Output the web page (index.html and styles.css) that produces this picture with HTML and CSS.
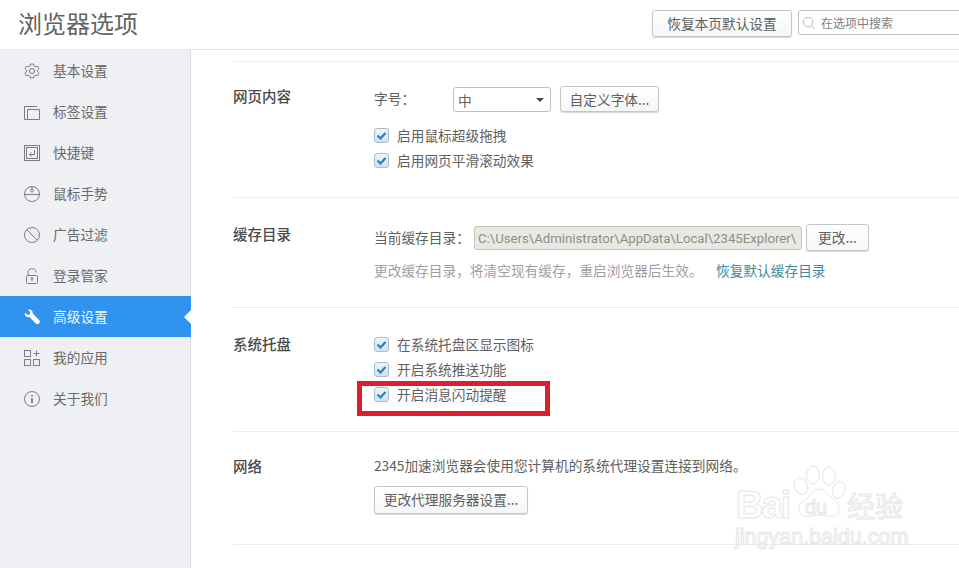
FILE: index.html
```html
<!DOCTYPE html>
<html lang="zh-CN">
<head>
<meta charset="utf-8">
<title>浏览器选项</title>
<link rel="stylesheet" href="styles.css">
</head>
<body>
<div class="page">
  <header class="top">
    <h1 class="title">浏览器选项</h1>
    <div class="top-actions">
      <button class="btn btn-reset">恢复本页默认设置</button>
      <div class="search">
        <svg class="search-icon" viewBox="0 0 16 16"><circle cx="7" cy="7" r="5.5"/><path d="M11 11l4 4"/></svg>
        <span>在选项中搜索</span>
      </div>
    </div>
  </header>
  <div class="body">
    <nav class="side">
      <a class="item"><svg class="ico" viewBox="0 0 16 16"><path d="M6.5 1h3l.5 2 1.6.8 2-.6 1.4 2.6-1.4 1.4v1.6l1.4 1.4-1.4 2.6-2-.6-1.600.8-.5 2h-3l-.5-2-1.600-.8-2 .6L1 10.200l1.400-1.400V7.200L1 5.800l1.400-2.600 2 .6L6 3z"/><circle cx="8" cy="8" r="2.600"/></svg><span class="t">基本设置</span></a>
      <a class="item"><svg class="ico" viewBox="0 0 16 16"><path d="M.5 15.500V2.500H13M3.500 15.500V5.500H15.500V15.500M.5 15.500H15.500"/></svg><span class="t">标签设置</span></a>
      <a class="item"><svg class="ico" viewBox="0 0 16 16"><rect x=".5" y=".5" width="15" height="15"/><rect x="2.500" y="2.500" width="11" height="11"/><path d="M10.500 5v4.500H5.500M7.500 7.500l-2 2 2 2"/></svg><span class="t">快捷键</span></a>
      <a class="item"><svg class="ico" viewBox="0 0 16 16"><rect x=".5" y=".5" width="15" height="15" rx="7.500"/><path d="M.5 8.500h15M8 .5v3"/><rect x="6.800" y="3" width="2.400" height="3" rx="1.200"/></svg><span class="t">鼠标手势</span></a>
      <a class="item"><svg class="ico" viewBox="0 0 16 16"><circle cx="8" cy="8" r="7.500"/><path d="M2.800 2.800l10.400 10.400"/></svg><span class="t">广告过滤</span></a>
      <a class="item"><svg class="ico" viewBox="0 0 16 16"><path d="M4 7V5a4 4 0 0 1 8-.5"/><rect x="2.500" y="7.500" width="11" height="8" rx="1"/><circle cx="8" cy="10.500" r="1"/><path d="M8 11.500v2"/></svg><span class="t">登录管家</span></a>
      <a class="item active"><svg class="ico" viewBox="0 0 16 16"><path class="solid" d="M1 3.500 3.500 6 5.800 5.200 6.300 3 3.800.8C6 -.3 9 1 8.800 4.500L15.500 11.500C16 12.500 15.800 13.500 15 14.500 14 15.500 12.800 15.500 12 14.800L5.500 8C2.500 8.500.2 6.500 1 3.500Z"/></svg><span class="t">高级设置</span></a>
      <a class="item"><svg class="ico" viewBox="0 0 16 16"><rect x=".5" y=".5" width="6" height="6"/><rect x=".5" y="9.500" width="6" height="6"/><rect x="9.500" y="9.500" width="6" height="6"/><path d="M12.500 .5v6M9.500 3.500h6"/></svg><span class="t">我的应用</span></a>
      <a class="item"><svg class="ico" viewBox="0 0 16 16"><circle cx="8" cy="8" r="7.500"/><path class="thick" d="M8 7v5M8 4v1.500"/></svg><span class="t">关于我们</span></a>
    </nav>
    <main class="main">
      <div class="spacer"></div>
      <section class="sec sec-font">
        <h2 class="sec-title">网页内容</h2>
        <div class="sec-body">
          <div class="row font-row">
            <span class="font-label">字号<span class="punct">：</span></span>
            <div class="select"><span>中</span><i class="caret"></i></div>
            <button class="btn btn-font">自定义字体...</button>
          </div>
          <label class="check"><i class="box"><svg viewBox="0 0 13 13"><path d="M2.500 6.500l3 3 5-5.500"/></svg></i><span class="t">启用鼠标超级拖拽</span></label>
          <label class="check"><i class="box"><svg viewBox="0 0 13 13"><path d="M2.500 6.500l3 3 5-5.500"/></svg></i><span class="t">启用网页平滑滚动效果</span></label>
        </div>
      </section>
      <section class="sec sec-cache">
        <h2 class="sec-title">缓存目录</h2>
        <div class="sec-body">
          <div class="row cache-row">
            <span class="cache-label t">当前缓存目录<span class="punct">：</span></span>
            <div class="path">C:\Users\Administrator\AppData\Local\2345Explorer\</div>
            <button class="btn btn-change">更改...</button>
          </div>
          <div class="hint-row">
            <span class="hint">更改缓存目录<span class="punct">，</span>将清空现有缓存<span class="punct">，</span>重启浏览器后生效。</span>
            <a class="link">恢复默认缓存目录</a>
          </div>
        </div>
      </section>
      <section class="sec sec-tray">
        <h2 class="sec-title">系统托盘</h2>
        <div class="sec-body">
          <label class="check"><i class="box"><svg viewBox="0 0 13 13"><path d="M2.500 6.500l3 3 5-5.500"/></svg></i><span class="t">在系统托盘区显示图标</span></label>
          <label class="check"><i class="box"><svg viewBox="0 0 13 13"><path d="M2.500 6.500l3 3 5-5.500"/></svg></i><span class="t">开启系统推送功能</span></label>
          <label class="check"><i class="box"><svg viewBox="0 0 13 13"><path d="M2.500 6.500l3 3 5-5.500"/></svg></i><span class="t">开启消息闪动提醒</span></label>
        </div>
      </section>
      <section class="sec sec-net">
        <h2 class="sec-title">网络</h2>
        <div class="sec-body">
          <p class="net-text">2345加速浏览器会使用您计算机的系统代理设置连接到网络。</p>
          <button class="btn btn-proxy">更改代理服务器设置...</button>
        </div>
      </section>
    </main>
  </div>
  <div class="redbox"></div>
  <div class="mark">
    <svg class="paw" viewBox="0 0 60 60"><ellipse cx="14" cy="23" rx="6.500" ry="8.500" transform="rotate(-20 14 23)"/><ellipse cx="26" cy="12" rx="6.500" ry="9"/><ellipse cx="42" cy="13" rx="6.500" ry="9"/><ellipse cx="52" cy="27" rx="6" ry="8.500" transform="rotate(20 52 27)"/><path d="M32 26C26 26 24 32 19 36 13 40 10 45 13 50 16 55 24 53 32 52 40 53 48 55 51 50 54 45 50 39 46 36 41 32 38 26 32 26Z"/></svg>
    <span class="mark-du">du</span>
    <span class="mark-bai">Bai</span>
    <span class="mark-jy">经验</span>
    <span class="mark-url">jingyan.baidu.com</span>
  </div>
</div>
</body>
</html>
```
FILE: styles.css
```css
* { box-sizing: border-box; }
html, body { margin: 0; padding: 0; }
body {
  width: 959px; height: 568px; overflow: hidden; background: #fff;
  font-family: "Noto Sans CJK SC", "Liberation Sans", sans-serif;
  font-size: 13.7px; color: #606060;
}
.page { position: relative; width: 959px; height: 568px; overflow: hidden; }
.t { padding-bottom: 2px; }
.punct { font-family: "Noto Sans CJK TC", sans-serif; }
.top {
  height: 50px; display: flex; align-items: flex-start; justify-content: space-between;
  border-bottom: 1px solid #e6e7e9; padding-left: 18px;
}
.title { margin: 6px 0 0; font-size: 24px; line-height: 34px; font-weight: 400; color: #626262; }
.top-actions { display: flex; gap: 6px; padding-top: 10px; width: 307px; flex: none; }
.btn {
  font: inherit; color: #606060; border: 1px solid #c4c6c9; border-radius: 3px;
  background: linear-gradient(#fff, #f5f6f8); box-shadow: 0 1px 1px #d8d8d8; padding: 0; line-height: 1;
}
.btn-reset { width: 140px; height: 27px; flex: none; }
.search {
  width: 200px; height: 25px; flex: none; display: flex; align-items: center; gap: 5px;
  border: 1px solid #bfc1c4; border-radius: 3px 0 0 3px; padding-left: 3px; font-size: 12px; color: #808080;
}
.search-icon { width: 14px; height: 14px; fill: none; stroke: #aeb2b6; stroke-width: 1; }
.body { display: flex; height: 518px; }
.side { width: 191px; flex: none; background: #eef0f4; border-right: 1px solid #dcdee2; }
.item { position: relative; display: flex; align-items: center; height: 41px; padding-left: 24px; gap: 13px; color: #6a6a6a; }
.ico { width: 16px; height: 16px; flex: none; fill: none; stroke: #7a7d85; stroke-width: 1; }
.thick { stroke-width: 1.800; }
.item.active { background: #3093ef; color: #e6fbff; margin-right: -1px; }
.item.active::after {
  content: ""; position: absolute; right: 0; top: 14px; width: 0; height: 0;
  border: 7px solid transparent; border-right-color: #fff; border-left-width: 0;
}
.solid { fill: #fff; stroke: none; }
.main { flex: 1; padding-left: 42px; min-width: 0; }
.spacer { height: 12px; border-bottom: 1px solid #ececec; }
.sec { display: flex; border-bottom: 1px solid #ececec; }
.sec-title { width: 141px; flex: none; margin: 0; font-size: 14.500px; line-height: 20px; font-weight: 500; color: #4a4a4a; }
.sec-body { flex: 1; min-width: 0; }
.sec-font { height: 136px; padding-top: 24px; }
.sec-cache { height: 110px; padding-top: 26px; }
.sec-tray { height: 124px; padding-top: 26px; }
.sec-net { height: 113px; padding-top: 24px; }
.row { display: flex; }
.font-row { align-items: flex-start; height: 37px; padding-top: 1px; }
.font-label { width: 79px; flex: none; line-height: 22px; }
.select {
  width: 98px; height: 25px; flex: none; display: flex; align-items: center; justify-content: space-between;
  border: 1px solid #bfc1c4; border-radius: 3px; padding: 0 6px 0 4px;
}
.caret { width: 0; height: 0; border: 4px solid transparent; border-top: 4px solid #444; border-bottom-width: 0; }
.btn-font { width: 99px; height: 26px; margin-left: 9px; margin-top: -1px; padding-top: 1px; flex: none; }
.check { display: flex; align-items: center; height: 25px; gap: 8px; }
.box {
  width: 15px; height: 15px; flex: none; border: 1px solid #aebcc7; border-radius: 3px;
  background: linear-gradient(#eef5fb, #cde2f3); display: block;
}
.box svg { display: block; width: 13px; height: 13px; fill: none; stroke: #2a7fb8; stroke-width: 2.200; }
.cache-row { align-items: center; height: 27px; }
.cache-label { width: 100px; flex: none; white-space: nowrap; }
.path {
  width: 328px; height: 24px; flex: none; border: 1px solid #c5c5bd; border-radius: 3px; background: #e9e9e3;
  color: #8e8e88; font-family: "Roboto", "Noto Sans CJK SC", sans-serif; font-size: 13.200px; line-height: 23px;
  padding-left: 3px; white-space: nowrap; overflow: hidden;
}
.btn-change { width: 63px; height: 27px; margin-left: 4px; flex: none; }
.hint-row { display: flex; margin-top: 9px; line-height: 20px; }
.hint { width: 342px; flex: none; color: #a0a0a0; white-space: nowrap; }
.link { color: #3f8aa0; white-space: nowrap; }
.sec-tray .sec-body { margin-top: -2px; }
.net-text { margin: -1px 0 0; line-height: 20px; padding-bottom: 1px; }
.btn-proxy { width: 154px; height: 28px; margin-top: 10px; display: block; }
.redbox { position: absolute; left: 357px; top: 381px; width: 193px; height: 35px; border: 5px solid #dc1f2e; }
.mark { position: absolute; left: 735px; top: 460px; width: 175px; height: 90px; color: transparent; -webkit-text-stroke: 1px #e6e6e6; }
.paw { position: absolute; left: 52px; top: 3px; width: 60px; height: 60px; fill: #fff; stroke: #e6e6e6; stroke-width: 1; }
.mark-bai { position: absolute; left: 1px; top: 23px; font: 700 38px/44px "Liberation Sans", sans-serif; letter-spacing: -2px; }
.mark-du { position: absolute; left: 70px; top: 35px; font: 400 20px/24px "Liberation Sans", sans-serif; }
.mark-jy { position: absolute; left: 112px; top: 28px; font-size: 28px; line-height: 34px; white-space: nowrap; }
.mark-url { position: absolute; left: 0; top: 64px; font: 400 21.500px/26px "Liberation Sans", sans-serif; white-space: nowrap; }
```
